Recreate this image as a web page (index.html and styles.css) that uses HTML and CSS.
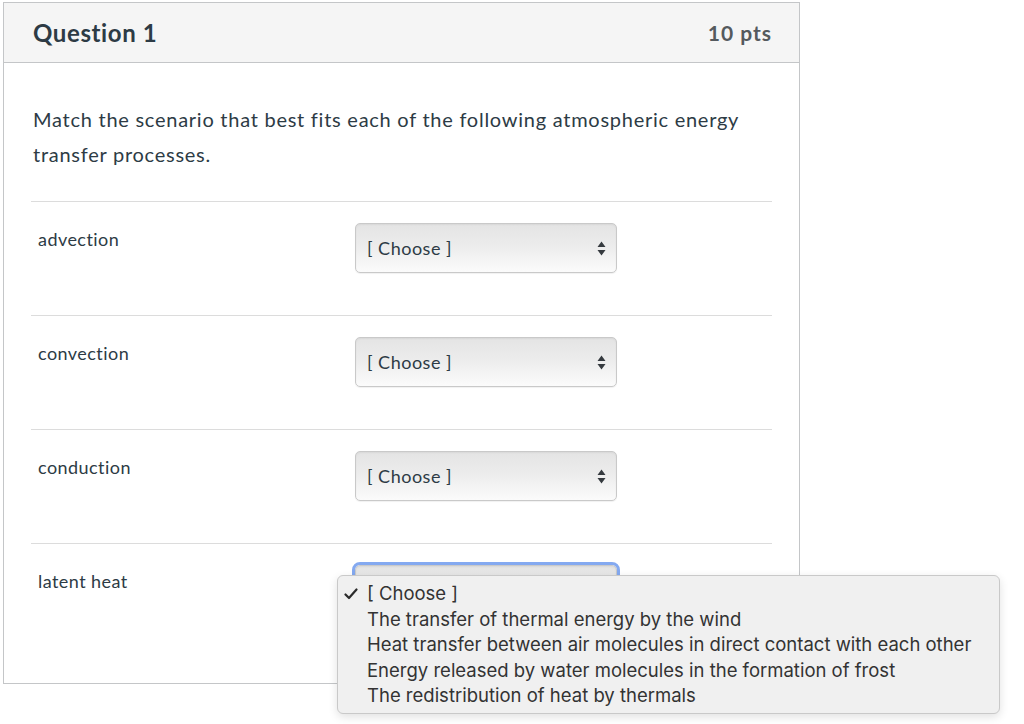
FILE: index.html
```html
<!DOCTYPE html>
<html lang="en">
<head>
<meta charset="utf-8">
<title>Question 1</title>
<link rel="stylesheet" href="styles.css">
</head>
<body>
<div class="page">
<div class="card">
  <div class="card-header">
    <h2 class="q-title">Question 1</h2>
    <span class="q-points">10 pts</span>
  </div>
  <div class="card-body">
    <p class="q-text">Match the scenario that best fits each of the following atmospheric energy transfer processes.</p>
    <div class="rows">
      <div class="row">
        <div class="label">advection</div>
        <div class="select-wrap">
          <div class="select"><span>[ Choose ]</span>
            <svg class="arrows" width="9" height="15" viewBox="0 0 9 15"><path d="M4.5 0.5 L8.5 6 L0.5 6 Z M4.5 14.5 L8.5 9 L0.5 9 Z" fill="#353a3f"/></svg>
          </div>
        </div>
      </div>
      <div class="row">
        <div class="label">convection</div>
        <div class="select-wrap">
          <div class="select"><span>[ Choose ]</span>
            <svg class="arrows" width="9" height="15" viewBox="0 0 9 15"><path d="M4.5 0.5 L8.5 6 L0.5 6 Z M4.5 14.5 L8.5 9 L0.5 9 Z" fill="#353a3f"/></svg>
          </div>
        </div>
      </div>
      <div class="row">
        <div class="label">conduction</div>
        <div class="select-wrap">
          <div class="select"><span>[ Choose ]</span>
            <svg class="arrows" width="9" height="15" viewBox="0 0 9 15"><path d="M4.5 0.5 L8.5 6 L0.5 6 Z M4.5 14.5 L8.5 9 L0.5 9 Z" fill="#353a3f"/></svg>
          </div>
        </div>
      </div>
      <div class="row row-last">
        <div class="label">latent heat</div>
        <div class="select-wrap">
          <div class="select focused"><span>[ Choose ]</span>
            <svg class="arrows" width="9" height="15" viewBox="0 0 9 15"><path d="M4.5 0.5 L8.5 6 L0.5 6 Z M4.5 14.5 L8.5 9 L0.5 9 Z" fill="#353a3f"/></svg>
          </div>
          <ul class="menu">
            <li class="checked"><svg class="check" width="14" height="12" viewBox="0 0 14 12"><path d="M1.5 6.5 L5 10 L12.5 1.5" fill="none" stroke="#2b2b2b" stroke-width="2.2" stroke-linecap="round" stroke-linejoin="round"/></svg>[ Choose ]</li>
            <li>The transfer of thermal energy by the wind</li>
            <li>Heat transfer between air molecules in direct contact with each other</li>
            <li>Energy released by water molecules in the formation of frost</li>
            <li>The redistribution of heat by thermals</li>
          </ul>
        </div>
      </div>
    </div>
  </div>
</div>
</div>
</body>
</html>
```

FILE: styles.css
```css
html, body {
  margin: 0;
  padding: 0;
  background: #ffffff;
}

body {
  font-family: Lato, "Open Sans", sans-serif;
  color: #2d3b45;
}

.page {
  min-height: 724px;
  padding-top: 2px;
  box-sizing: border-box;
}

.card {
  box-sizing: border-box;
  width: 797px;
  margin: 0 0 0 3px;
  border: 1px solid #c4c6c8;
  background: #fff;
}

.card-header {
  box-sizing: border-box;
  height: 60px;
  background: #f5f5f5;
  border-bottom: 1px solid #c4c6c8;
  display: flex;
  align-items: center;
  justify-content: space-between;
  padding: 0 27px 0 29px;
}

.q-title {
  margin: 0;
  font-size: 24px;
  font-weight: 700;
  letter-spacing: 0.6px;
  color: #2d3b45;
}

.q-points {
  font-size: 21px;
  font-weight: 700;
  letter-spacing: 1px;
  color: #555a5e;
}

.card-body {
  padding: 39px 27px 26px 27px;
}

.q-text {
  margin: 0 0 29px 0;
  font-size: 20px;
  line-height: 35px;
  letter-spacing: 0.74px;
  padding-left: 2px;
}

.row {
  box-sizing: border-box;
  border-top: 1px solid #dcdcdc;
  height: 114px;
  display: flex;
  align-items: flex-start;
  padding-left: 7px;
  padding-top: 21px;
}

.label {
  width: 317px;
  font-size: 18px;
  line-height: 27px;
  letter-spacing: 0.45px;
  padding-top: 3px;
  color: #2d3b45;
}

.select-wrap {
  position: relative;
}

.select {
  box-sizing: border-box;
  width: 262px;
  height: 50px;
  border: 1px solid #c9c9c9;
  border-radius: 5px;
  background: linear-gradient(to bottom, #e4e4e4 0%, #ececec 45%, #fbfbfb 100%);
  box-shadow: inset 0 1px 2px rgba(0,0,0,0.06), 0 1px 1px rgba(0,0,0,0.06);
  display: flex;
  align-items: center;
  justify-content: space-between;
  padding: 0 10px 0 11px;
  font-size: 18px;
  letter-spacing: 0.5px;
  color: #2d3b45;
}

.arrows {
  display: block;
}

.focused {
  outline: 3px solid #84a9f0;
  outline-offset: 0;
}

.menu {
  position: absolute;
  left: -18px;
  top: 10px;
  width: 663px;
  height: 139px;
  box-sizing: border-box;
  margin: 0;
  padding: 5px 0 0 29px;
  list-style: none;
  background: #f0f0f0;
  border: 1px solid #c9c9c9;
  border-radius: 6px;
  box-shadow: 0 3px 10px rgba(0,0,0,0.12);
  font-family: Inter, "Liberation Sans", sans-serif;
  font-size: 18.5px;
  line-height: 25.5px;
  color: #333333;
  z-index: 10;
}

.menu li {
  position: relative;
  white-space: nowrap;
}

.check {
  position: absolute;
  left: -23px;
  top: 7px;
}
```
